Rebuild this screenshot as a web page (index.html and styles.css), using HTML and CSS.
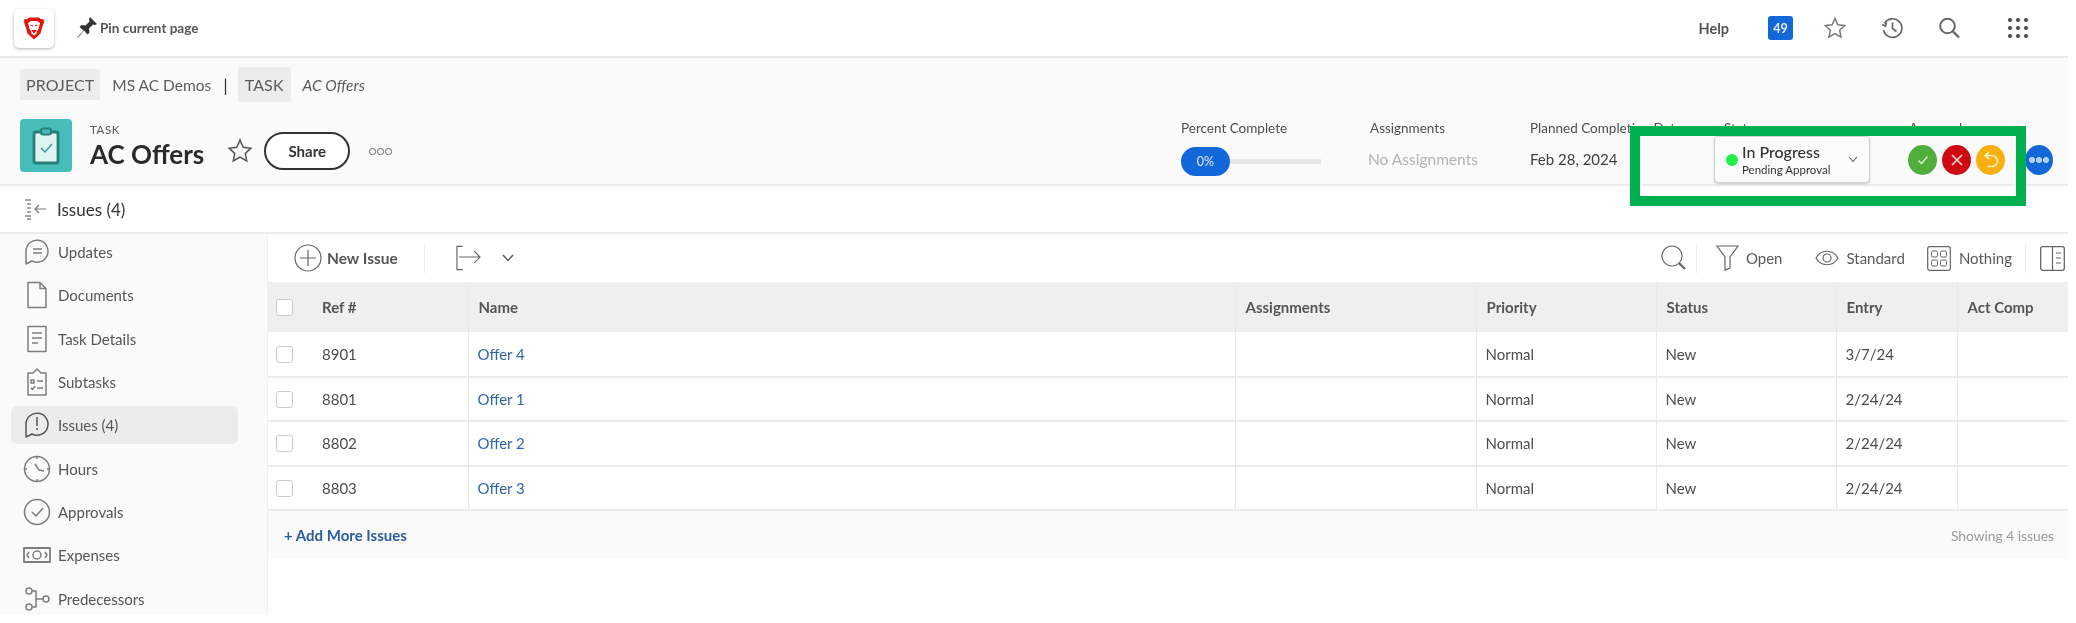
FILE: index.html
```html
<!DOCTYPE html>
<html lang="en">
<head>
<meta charset="utf-8">
<title>AC Offers</title>
<link rel="stylesheet" href="styles.css">
</head>
<body>
<div class="page">
  <header class="topbar">
    <div class="logo">
      <svg width="20" height="23" viewBox="0 0 20 23"><path d="M5 .5h10l2 1.800 2.500-.3L20 5l-2 6-1.500 5.500L10 22.500l-6.500-6L2 11 0 5l.5-3L3 2.300z" fill="#e8140c"/><path d="M4 6l3-2h6l3 2-1.500 6-2 3 .3 1.500L10 18.500l-2.800-2 .3-1.500-2-3z" fill="#fff"/><path d="M6.500 8l2.500 1M13.500 8L11 9M8 13.500h4l-2 2.500z" fill="#e8140c" stroke="#e8140c"/></svg>
    </div>
    <div class="pin">
      <svg width="24" height="26" viewBox="0 0 24 26"><path d="M15 2l7 7-2 1-2-.5-4 4 .5 4-2 2-3.500-4L3 22.500 2.500 22l6-6.500-4-3.500 2-2 4 .5 4-4L14 4z" fill="#333"/></svg>
      <span>Pin current page</span>
    </div>
    <nav class="topnav">
      <span class="help">Help</span>
      <span class="badge">49</span>
      <svg class="star-t" width="24" height="24" viewBox="0 0 24 24"><path d="M12 2.500l2.900 6.300 6.800.8-5 4.700 1.300 6.800-6-3.400-6 3.400 1.300-6.800-5-4.700 6.800-.8z" fill="none" stroke="#777" stroke-width="1.500"/></svg>
      <svg class="clock-t" width="24" height="24" viewBox="0 0 24 24"><path d="M4.500 7.500A9.300 9.300 0 1 1 3.500 14M2 8.500l3.500 1.500 1-3.500M12.500 6.500v6l4 3" fill="none" stroke="#666" stroke-width="1.700"/></svg>
      <svg class="search-t" width="24" height="24" viewBox="0 0 24 24"><circle cx="10.500" cy="10" r="7.300" fill="none" stroke="#666" stroke-width="2"/><path d="M16 15.500l6 6" stroke="#666" stroke-width="2.400"/></svg>
      <svg class="apps-t" width="22" height="22" viewBox="0 0 22 22" fill="#444"><circle cx="3" cy="3" r="2"/><circle cx="11" cy="3" r="2"/><circle cx="19" cy="3" r="2"/><circle cx="3" cy="11" r="2"/><circle cx="11" cy="11" r="2"/><circle cx="19" cy="11" r="2"/><circle cx="3" cy="19" r="2"/><circle cx="11" cy="19" r="2"/><circle cx="19" cy="19" r="2"/></svg>
    </nav>
  </header>

  <section class="band">
    <div class="crumbs">
      <span class="chip">PROJECT</span>
      <span class="crumb">MS AC Demos</span>
      <span class="sep">|</span>
      <span class="chip chip-tall">TASK</span>
      <em class="crumb">AC Offers</em>
    </div>
    <div class="titlerow">
      <div class="tile">
        <svg width="28" height="38" viewBox="0 0 28 38"><rect x="2" y="5" width="24" height="31" rx="2" fill="#dff3f1" stroke="#2a7d79" stroke-width="2.800"/><rect x="9" y="1.500" width="10" height="6" rx="2" fill="#47bdb9" stroke="#2a7d79" stroke-width="2"/><path d="M9 21l4 4 7-8" fill="none" stroke="#3aa09b" stroke-width="1.500"/></svg>
      </div>
      <div class="titles">
        <div class="kicker">TASK</div>
        <h1>AC Offers</h1>
      </div>
      <svg class="title-star" width="26" height="26" viewBox="0 0 24 24"><path d="M12 2l3 6.500 7 .9-5.100 4.800 1.300 7L12 17.700l-6.200 3.500 1.300-7L2 9.400l7-.9z" fill="none" stroke="#555" stroke-width="1.400"/></svg>
      <button class="share">Share</button>
      <span class="ooo"><i></i><i></i><i></i></span>
      <div class="stats">
        <div class="stat s-pct">
          <div class="label">Percent Complete</div>
          <div class="progress"><span class="pill">0%</span><span class="track"></span></div>
        </div>
        <div class="stat s-asg">
          <div class="label">Assignments</div>
          <div class="value muted">No Assignments</div>
        </div>
        <div class="stat s-date">
          <div class="label">Planned Completion Date</div>
          <div class="value">Feb 28, 2024</div>
        </div>
        <div class="stat s-status">
          <div class="label lab-status">Status</div>
          <div class="statusbox">
            <span class="dot"></span>
            <span class="st-text"><b>In Progress</b><small>Pending Approval</small></span>
            <svg width="10" height="7" viewBox="0 0 10 7"><path d="M1 1l4 4.500L9 1" fill="none" stroke="#666" stroke-width="1.100"/></svg>
          </div>
        </div>
        <div class="stat s-appr">
          <div class="label">Approvals</div>
          <div class="circles">
            <span class="circle c-green"><svg width="14" height="14" viewBox="0 0 14 14"><path d="M2.500 7.500l3 3 6-7" fill="none" stroke="#d9f0d4" stroke-width="1.500"/></svg></span>
            <span class="circle c-red"><svg width="14" height="14" viewBox="0 0 14 14"><path d="M2 2l10 10M12 2L2 12" fill="none" stroke="#f6d8d8" stroke-width="1.600"/></svg></span>
            <span class="circle c-amber"><svg width="18" height="20" viewBox="0 0 18 20"><path d="M7 2L3 5.500 7 9M3.500 5.500H10a5 5 0 0 1 0 11H5.500" fill="none" stroke="#fff2c8" stroke-width="1.600"/></svg></span>
          </div>
        </div>
        <span class="circle c-blue"><i></i><i></i><i></i></span>
      </div>
    </div>
  </section>

  <div class="subhead">
    <svg width="24" height="22" viewBox="0 0 24 22"><path d="M1 2h6M3 6h4M3 10h4M3 14h4M1 18h6M3 21h4" stroke="#888" stroke-width="1.300"/><path d="M22 11H11M15 7l-4 4 4 4" fill="none" stroke="#777" stroke-width="1.200"/></svg>
    <span>Issues (4)</span>
  </div>

  <div class="main">
    <aside class="side">
      <a class="nav-item"><svg viewBox="0 0 28 28"><path d="M3 26V13A11 11 0 1 1 9 23z" class="ln"/><path d="M10 11h9M10 15h9" class="ln"/></svg><span>Updates</span></a>
      <a class="nav-item"><svg viewBox="0 0 28 28"><path d="M5 1.500h12l6 6v19H5z M17 1.500v6h6" class="ln"/></svg><span>Documents</span></a>
      <a class="nav-item"><svg viewBox="0 0 28 28"><path d="M5 1.500h18v25H5z" class="ln"/><path d="M9 8h10M9 13h10M9 18h6" class="ln"/></svg><span>Task Details</span></a>
      <a class="nav-item"><svg viewBox="0 0 28 28"><path d="M5 5h5l4-4 4 4h5v22H5z" class="ln"/><path d="M8 12h3v3H8zM14 13h6M8 20l1.500 1.500L12 18M14 20h6" class="ln"/></svg><span>Subtasks</span></a>
      <a class="nav-item active"><svg viewBox="0 0 28 28"><path d="M3 26V13A11 11 0 1 1 9 23z" class="ln dark"/><path d="M14 6v9M14 17v2" class="ln dark"/></svg><span>Issues (4)</span></a>
      <a class="nav-item"><svg viewBox="0 0 28 28"><circle cx="14" cy="14" r="12.500" class="ln"/><path d="M12 9l4 6 5 1M14 1v3M14 24v3M1 14h3M24 14h3" class="ln"/></svg><span>Hours</span></a>
      <a class="nav-item"><svg viewBox="0 0 28 28"><circle cx="14" cy="14" r="12.500" class="ln"/><path d="M9 14l4 4 7-8" class="ln"/></svg><span>Approvals</span></a>
      <a class="nav-item"><svg viewBox="0 0 28 28"><path d="M1 7h26v14H1z" class="ln thick"/><circle cx="14" cy="14" r="4" class="ln"/><path d="M6 11l-2 3 2 3M22 11l2 3-2 3" class="ln"/></svg><span>Expenses</span></a>
      <a class="nav-item"><svg viewBox="0 0 28 28"><circle cx="6" cy="6" r="3" class="ln"/><circle cx="6" cy="22" r="3" class="ln"/><circle cx="23" cy="14" r="3" class="ln"/><path d="M9 6h4v16H9M13 14h7" class="ln"/></svg><span>Predecessors</span></a>
    </aside>

    <section class="content">
      <div class="toolbar">
        <svg class="tb-plus" width="28" height="28" viewBox="0 0 28 28"><circle cx="14" cy="14" r="13" fill="none" stroke="#666" stroke-width="1.200"/><path d="M14 6v16M6 14h16" stroke="#666" stroke-width="1.200"/></svg>
        <span class="tb-new">New Issue</span>
        <span class="tb-div tb-div1"></span>
        <svg class="tb-move" width="26" height="26" viewBox="0 0 27 26"><path d="M8 1H2v24h6M4 12h22M20 6l6 6-6 6" fill="none" stroke="#666" stroke-width="1.200"/></svg>
        <svg class="tb-chev" width="12" height="8" viewBox="0 0 12 8"><path d="M1 1l5 5.500L11 1" fill="none" stroke="#555" stroke-width="1.400"/></svg>
        <div class="tb-right">
          <svg class="tb-search" width="26" height="26" viewBox="0 0 26 26"><circle cx="11" cy="11" r="10" fill="none" stroke="#666" stroke-width="1.200"/><path d="M18 18l6 6" stroke="#666" stroke-width="2.200"/></svg>
          <span class="tb-div tb-div2"></span>
          <svg class="tb-filter" width="23" height="26" viewBox="0 0 23 26"><path d="M1 1h21l-8 11v11l-5 2V12z" fill="none" stroke="#666" stroke-width="1.200"/></svg>
          <span class="tb-txt t-open">Open</span>
          <svg class="tb-eye" width="24" height="16" viewBox="0 0 24 16"><path d="M1 8c5-9 17-9 22 0-5 9-17 9-22 0z" fill="none" stroke="#666" stroke-width="1.200"/><circle cx="12" cy="8" r="4" fill="none" stroke="#666" stroke-width="1.200"/></svg>
          <span class="tb-txt t-std">Standard</span>
          <svg class="tb-grid" width="24" height="25" viewBox="0 0 24 25"><rect x=".7" y=".7" width="22.600" height="23.600" rx="2" fill="none" stroke="#666" stroke-width="1.200"/><rect x="4.500" y="5" width="6" height="6" rx="1.500" fill="none" stroke="#666"/><rect x="13.500" y="5" width="6" height="6" rx="1.500" fill="none" stroke="#666"/><rect x="4.500" y="14" width="6" height="6" rx="1.500" fill="none" stroke="#666"/><rect x="13.500" y="14" width="6" height="6" rx="1.500" fill="none" stroke="#666"/></svg>
          <span class="tb-txt t-not">Nothing</span>
          <span class="tb-div tb-div3"></span>
          <svg class="tb-panel" width="25" height="25" viewBox="0 0 25 25"><rect x=".7" y=".7" width="23.600" height="23.600" rx="2" fill="none" stroke="#666" stroke-width="1.300"/><path d="M12.500 1v23M16 7h5M16 12h5M16 17h5" stroke="#666" stroke-width="1.200"/></svg>
        </div>
      </div>

      <table class="grid">
        <colgroup><col class="c1"><col class="c2"><col class="c3"><col class="c4"><col class="c5"><col class="c6"><col class="c7"></colgroup>
        <thead>
          <tr><th class="first"><span class="cb"></span>Ref #</th><th>Name</th><th>Assignments</th><th>Priority</th><th>Status</th><th>Entry</th><th>Act Comp</th></tr>
        </thead>
        <tbody>
          <tr><td class="first"><span class="cb"></span>8901</td><td><a class="link">Offer 4</a></td><td></td><td>Normal</td><td>New</td><td>3/7/24</td><td></td></tr>
          <tr><td class="first"><span class="cb"></span>8801</td><td><a class="link">Offer 1</a></td><td></td><td>Normal</td><td>New</td><td>2/24/24</td><td></td></tr>
          <tr><td class="first"><span class="cb"></span>8802</td><td><a class="link">Offer 2</a></td><td></td><td>Normal</td><td>New</td><td>2/24/24</td><td></td></tr>
          <tr><td class="first"><span class="cb"></span>8803</td><td><a class="link">Offer 3</a></td><td></td><td>Normal</td><td>New</td><td>2/24/24</td><td></td></tr>
        </tbody>
      </table>
      <div class="addrow">
        <a class="add">+ Add More Issues</a>
        <span class="showing">Showing 4 issues</span>
      </div>
    </section>
  </div>

  <div class="highlight"></div>
</div>
</body>
</html>
```
FILE: styles.css
```css
* { box-sizing: border-box; }
html, body { margin: 0; padding: 0; background: #fff; }
body { font-family: Lato, "Open Sans", sans-serif; color: #4a4a4a; overflow: hidden; }
.page { position: relative; width: 2068px; height: 623px; filter: blur(.45px); }

.topbar { height: 58px; border-bottom: 2px solid #e9e9e9; display: flex; align-items: center; padding-left: 14px; }
.logo { width: 40px; height: 39px; background: #fff; border-radius: 5px; box-shadow: 0 1px 3px rgba(0,0,0,.3); display: flex; align-items: center; justify-content: center; }
.pin { display: flex; align-items: center; margin-left: 21px; font-size: 13.500px; font-weight: 700; color: #555; }
.pin span { margin-left: 1px; }
.topnav { margin-left: auto; display: flex; align-items: center; }
.help { font-size: 14.500px; font-weight: 700; color: #555; }
.badge { width: 25px; height: 24px; margin-left: 39px; background: #1268d8; border-radius: 3px; color: #e8f0fb; font-size: 12.500px; font-weight: 700; display: flex; align-items: center; justify-content: center; }
.star-t { margin-left: 30px; }
.clock-t { margin-left: 33px; }
.search-t { margin-left: 33px; }
.apps-t { margin-left: 46px; margin-right: 39px; }

.band { height: 128px; background: #fafafa; border-bottom: 2px solid #ececec; padding: 9px 0 0 20px; }
.crumbs { display: flex; align-items: center; height: 35px; font-size: 15.500px; color: #5c5c5c; }
.chip { background: #ececec; height: 31px; padding: 0 6px; display: flex; align-items: center; border-radius: 2px; font-size: 16px; letter-spacing: .1px; }
.chip-tall { height: 35px; padding: 0 7px; }
.crumb { margin-left: 12px; }
.sep { margin: 0 10px 0 12px; color: #333; font-size: 18px; }
.titlerow { display: flex; align-items: flex-start; margin-top: 17px; }
.tile { width: 52px; height: 53px; background: #47bdb9; border-radius: 4px; display: flex; align-items: center; justify-content: center; }
.titles { margin-left: 18px; margin-top: 5px; }
.kicker { font-size: 11.500px; letter-spacing: .6px; line-height: 12px; color: #555; }
h1 { margin: 1px 0 0; font-size: 26px; line-height: 34px; font-weight: 700; color: #2a2a2a; }
.title-star { margin: 19px 0 0 23px; flex: none; }
.share { margin: 13px 0 0 11px; width: 86px; height: 38px; border: 2px solid #333; border-radius: 19px; background: #fff; font: 700 15px Lato, sans-serif; color: #333; padding: 0; }
.ooo { margin: 29px 0 0 19px; display: flex; gap: 1.500px; }
.ooo i { width: 6.500px; height: 6.500px; border: 1.300px solid #666; border-radius: 50%; }

.stats { margin-left: auto; display: flex; align-items: flex-start; }
.stat { flex: none; }
.s-pct { width: 189px; }
.s-asg { width: 160px; }
.s-date { width: 184px; }
.s-status { width: 195px; }
.s-appr { width: 116px; }
.label { font-size: 13.500px; line-height: 18px; color: #4e4e4e; white-space: nowrap; }
.lab-status { margin-left: 10px; }
.progress { display: flex; align-items: center; margin-top: 10px; }
.pill { width: 49px; height: 29px; border-radius: 15px; background: #1268d8; color: #dfeafa; font-size: 12.500px; display: flex; align-items: center; justify-content: center; }
.track { width: 91px; height: 5px; background: #e6e6e6; }
.value { font-size: 15px; line-height: 29px; margin-top: 8px; color: #3e3e3e; white-space: nowrap; }
.muted { color: #b3b3b3; margin-left: -2px; font-size: 15.500px; }
.statusbox { width: 156px; height: 47px; margin-top: -1px; background: #fbfbfb; border: 1px solid #d2d2d2; border-radius: 4px; box-shadow: 0 1px 2px rgba(0,0,0,.2); display: flex; align-items: center; padding-left: 11px; }
.dot { width: 12px; height: 12px; border-radius: 50%; background: #22f04a; flex: none; }
.st-text { display: flex; flex-direction: column; margin-left: 4px; color: #333; }
.st-text b { font-size: 16px; line-height: 21px; font-weight: 500; }
.st-text small { font-size: 11.500px; line-height: 16px; white-space: nowrap; }
.statusbox svg { margin-left: 18px; }
.circles { display: flex; gap: 5px; margin-top: 8px; margin-left: -1px; }
.circle { width: 29px; height: 30px; border-radius: 50%; display: flex; align-items: center; justify-content: center; flex: none; }
.c-green { background: #4fae3c; }
.c-red { background: #cf0a12; }
.c-amber { background: #f7b010; }
.c-blue { background: #1268d8; gap: 1px; margin-top: 26px; width: 28px; margin-right: 15px; }
.c-blue i { width: 6px; height: 6px; background: #a9c9f5; border: 1.500px solid #d5e5fb; border-radius: 50%; }

.subhead { height: 48px; border-bottom: 2px solid #ececec; display: flex; align-items: center; padding-left: 24px; font-size: 17px; color: #333; }
.subhead span { margin-left: 9px; }

.main { display: flex; height: 381px; }
.side { width: 268px; flex: none; background: #fafafa; border-right: 1px solid #f0f0f0; }
.nav-item { display: flex; align-items: center; height: 38px; margin: 0 29px 5.350px 11px; padding-left: 12px; border-radius: 6px; font-size: 15px; color: #565656; }
.nav-item:first-child { margin-top: -1px; }
.nav-item svg { width: 28px; height: 28px; flex: none; }
.nav-item span { margin-left: 7px; white-space: nowrap; }
.active { background: #ececec; }
.ln { fill: none; stroke: #7d7d7d; stroke-width: 1.500; stroke-linejoin: round; }
.dark { stroke: #555; }
.thick { stroke-width: 1.800; }

.content { flex: 1; min-width: 0; }
.toolbar { height: 48px; display: flex; align-items: center; padding-left: 26px; }
.tb-new { margin-left: 5px; font-size: 15.500px; font-weight: 700; color: #555; white-space: nowrap; }
.tb-div { width: 1px; height: 30px; background: #ececec; flex: none; }
.tb-div1 { margin-left: 26px; }
.tb-move { margin-left: 30px; }
.tb-chev { margin-left: 21px; }
.tb-right { margin-left: auto; display: flex; align-items: center; padding-right: 3px; }
.tb-div2 { margin: 0 19px 0 9px; }
.tb-txt { font-size: 15px; color: #5a5a5a; white-space: nowrap; }
.t-open { margin-left: 7px; }
.tb-eye { margin-left: 33px; }
.t-std { margin-left: 7px; }
.tb-grid { margin-left: 22px; }
.t-not { margin-left: 8px; }
.tb-div3 { margin: 0 14px 0 13px; }

.grid { width: 1800px; border-collapse: collapse; table-layout: fixed; font-size: 15px; color: #4c4c4c; }
.c1 { width: 200px; } .c2 { width: 767px; } .c3 { width: 241px; } .c4 { width: 180px; } .c5 { width: 180px; } .c6 { width: 121px; } .c7 { width: 111px; }
.grid th { height: 50px; padding: 0 0 0 10px; background: #efefef; text-align: left; font-size: 15px; font-weight: 700; color: #555; border-left: 1px solid #e9e9e9; }
.grid td { height: 44.500px; padding: 0 0 0 9px; background: #fff; border-left: 1px solid #e9e9e9; border-bottom: 2px solid #ececec; }
.grid .first { padding-left: 8px; border-left: 0; }
.cb { display: inline-block; width: 17px; height: 17px; margin-right: 29px; background: #fff; border: 1px solid #ccc; border-radius: 3px; vertical-align: -3px; }
.link { color: #2f66a8; }
.addrow { height: 48px; background: #fafafa; display: flex; align-items: center; justify-content: space-between; padding: 0 14px 0 16px; }
.add { font-size: 15px; font-weight: 700; color: #2c5c9c; }
.showing { font-size: 13.800px; color: #9a9a9a; }

.highlight { position: absolute; left: 1630px; top: 126px; width: 396px; height: 80px; border: 10px solid #00b050; }
```
